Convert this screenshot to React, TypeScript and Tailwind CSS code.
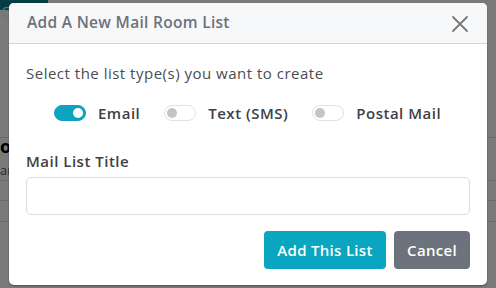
import { useState } from "react";

function Toggle({ on, onClick }: { on: boolean; onClick: () => void }) {
    return (
        <button
            type="button"
            onClick={onClick}
            className={`flex items-center w-[32px] h-[16px] rounded-full border px-[2px] ${on ? "bg-[#0ba3bf] border-[#0ba3bf] justify-end" : "bg-white border-[#dee2e6] justify-start"}`}
        >
            <span className={`w-[10px] h-[10px] rounded-full ${on ? "bg-white" : "bg-[#c4c4c4]"}`} />
        </button>
    );
}

export default function App() {
    const [types, setTypes] = useState({ email: true, sms: false, postal: false });
    const [title, setTitle] = useState("");

    const items: { key: keyof typeof types; label: string }[] = [
        { key: "email", label: "Email" },
        { key: "sms", label: "Text (SMS)" },
        { key: "postal", label: "Postal Mail" },
    ];

    return (
        <div className="relative w-[496px] h-[288px] overflow-hidden bg-white font-['Open_Sans',sans-serif]">
            {/* page behind the modal */}
            <div className="flex flex-col">
                <div className="h-[10px] flex">
                    <div className="w-[48px] bg-[#0b7f92] text-[#cfe] text-[15px] leading-[22px] pl-[1px]">C</div>
                </div>
                <div className="h-[128px] border-b border-[#ddd]" />
                <div className="h-[17px] flex items-end text-[18px] font-bold text-black leading-[18px]">o</div>
                <div className="h-[26px] border-b border-[#ddd] flex items-end text-[13px] text-[#555]">ar</div>
                <div className="h-[20px] border-b border-[#ddd]" />
                <div className="h-[21px] border-b border-[#ddd]" />
            </div>

            {/* overlay + modal */}
            <div className="absolute inset-0 bg-black/[0.52] pl-[9px] pr-[9px] pt-[3px] pb-[3px]">
                <div className="h-full bg-white rounded-[5px] shadow-[0_1px_2px_rgba(0,0,0,0.35)] overflow-hidden flex flex-col tracking-[0.5px]">
                    <div className="h-[41px] bg-[#f7f8fa] border-b border-[#d4d4d4] flex items-center justify-between pl-[18px] pr-[18px]">
                        <span className="text-[15.5px] font-semibold text-[#6d7178] tracking-[0.3px]">Add A New Mail Room List</span>
                        <svg width="18" height="18" viewBox="0 0 18 18" className="mt-[1px]">
                            <path d="M2 2 L16 16 M16 2 L2 16" stroke="#777" strokeWidth="1.8" strokeLinecap="round" />
                        </svg>
                    </div>

                    <div className="px-[17px] pt-[19px]">
                        <p className="text-[15px] text-[#4a4d52] leading-[20px]">Select the list type(s) you want to create</p>

                        <div className="flex items-center gap-[24px] mt-[20px] pl-[28px] h-[20px]">
                            {items.map((it) => (
                                <div key={it.key} className="flex items-center gap-[12px]">
                                    <Toggle on={types[it.key]} onClick={() => setTypes({ ...types, [it.key]: !types[it.key] })} />
                                    <span className="text-[15px] font-semibold text-[#3d4045]">{it.label}</span>
                                </div>
                            ))}
                        </div>

                        <label className="block mt-[28px] text-[15px] font-semibold text-[#3d4045] leading-[20px]">Mail List Title</label>
                        <input
                            type="text"
                            value={title}
                            onChange={(e) => setTitle(e.target.value)}
                            className="mt-[6px] block w-full h-[38px] rounded-[5px] border border-[#dcdfe3] outline-none px-3"
                        />

                        <div className="flex justify-end gap-[8px] mt-[16px]">
                            <button className="w-[122px] h-[38px] rounded-[4px] bg-[#0aa5c0] text-white text-[15px] font-semibold tracking-[0.3px]">Add This List</button>
                            <button className="w-[76px] h-[38px] rounded-[4px] bg-[#6c737c] text-white text-[15px] font-semibold tracking-[0.3px]">Cancel</button>
                        </div>
                    </div>
                </div>
            </div>
        </div>
    );
}
